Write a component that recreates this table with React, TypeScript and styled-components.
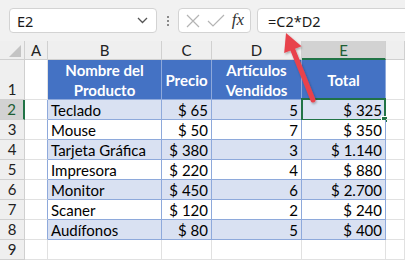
import React from "react";
import styled, { createGlobalStyle, css } from "styled-components";

const Global = createGlobalStyle`
  html, body { margin: 0; padding: 0; background: #ffffff; }
  body { width: 405px; height: 261px; overflow: hidden; }
  * { box-sizing: border-box; }
`;

const Page = styled.div`
  position: relative;
  width: 405px;
  height: 261px;
  overflow: hidden;
  font-family: Lato, "Open Sans", sans-serif;
`;

/* ---------- formula bar ---------- */

const Toolbar = styled.div`
  height: 41px;
  background: #f1f1f1;
  display: flex;
  align-items: flex-start;
  padding: 8px 0 0 9px;
  overflow: hidden;
`;

const Field = styled.div<{ $w?: number }>`
  height: 25px;
  background: #ffffff;
  border: 1px solid #d3d3d3;
  border-radius: 4px;
  display: flex;
  align-items: center;
  flex: 0 0 ${(p) => (p.$w ? `${p.$w}px` : "auto")};
  font-family: "Noto Sans", "Open Sans", sans-serif;
  font-size: 14.5px;
  color: #1a1a1a;
`;

const NameBox = styled(Field)`
  justify-content: space-between;
  padding: 0 8px 0 7px;
`;

const FxBox = styled(Field)`
  justify-content: space-between;
  padding: 0 6px 0 6px;
`;

const FormulaBox = styled(Field)`
  flex: 0 0 170px;
  margin-left: 6px;
  padding-left: 10px;
`;

const Grip = styled.div`
  flex: 0 0 21px;
  height: 25px;
  display: flex;
  flex-direction: column;
  align-items: center;
  justify-content: center;
  gap: 2px;
  span {
    width: 2px;
    height: 2px;
    background: #8a8a8a;
  }
`;

const FxLabel = styled.span`
  font-family: "Liberation Serif", "DejaVu Serif", serif;
  font-style: italic;
  font-size: 17px;
  color: #333;
  margin-top: -2px;
`;

/* ---------- sheet grid ---------- */

const Sheet = styled.div`
  display: grid;
  grid-template-columns: 25px 23px 114px 50px 90px 84px 1fr;
  grid-template-rows: 19px 40px repeat(8, 20px);
  font-size: 15px;
`;

type Kind = "corner" | "col" | "row" | "blank" | "th" | "td";

const GRID = "#e1e1e1";
const HEAD_LINE = "#d0d0d0";
const TABLE_LINE = "#8ea9db";
const BAND = "#d9e1f2";
const HEAD_BG = "#4472c4";
const GREEN = "#217346";

const Cell = styled.div<{
  $kind: Kind;
  $band?: boolean;
  $right?: boolean;
  $active?: boolean;
  $edge?: boolean;
}>`
  position: relative;
  display: flex;
  align-items: center;
  white-space: nowrap;
  color: #000;
  border-right: 1px solid ${GRID};
  border-bottom: 1px solid ${GRID};
  padding: 0 3px;
  justify-content: ${(p) => (p.$right ? "flex-end" : "flex-start")};

  ${(p) =>
    p.$kind === "corner" &&
    css`
      background: #efefef;
      border-right-color: ${HEAD_LINE};
      border-bottom-color: ${HEAD_LINE};
    `}

  ${(p) =>
    p.$kind === "col" &&
    css`
      justify-content: center;
      background: ${p.$active ? "#d2d2d2" : "#efefef"};
      color: ${p.$active ? "#1d5e35" : "#222"};
      border-right-color: ${HEAD_LINE};
      border-bottom: ${p.$active ? `2px solid ${GREEN}` : `1px solid ${HEAD_LINE}`};
      font-size: 15px;
    `}

  ${(p) =>
    p.$kind === "row" &&
    css`
      justify-content: center;
      align-items: flex-end;
      padding-bottom: 1px;
      background: ${p.$active ? "#d2d2d2" : "#efefef"};
      color: ${p.$active ? "#1d5e35" : "#222"};
      border-bottom-color: ${HEAD_LINE};
      border-right: ${p.$active ? `2px solid ${GREEN}` : `1px solid ${HEAD_LINE}`};
    `}

  ${(p) =>
    p.$kind === "blank" &&
    p.$edge &&
    css`
      border-right-color: ${TABLE_LINE};
    `}

  ${(p) =>
    p.$kind === "th" &&
    css`
      background: ${HEAD_BG};
      color: #fff;
      font-weight: 700;
      justify-content: center;
      text-align: center;
      white-space: normal;
      line-height: 20px;
      border-right-color: ${TABLE_LINE};
      border-bottom-color: ${TABLE_LINE};
    `}

  ${(p) =>
    p.$kind === "td" &&
    css`
      background: ${p.$band ? BAND : "#fff"};
      border-right-color: ${TABLE_LINE};
      border-bottom-color: ${TABLE_LINE};
    `}
`;

/* green frame around the active cell, with its fill handle */
const Selection = styled.div`
  position: absolute;
  left: -1px;
  top: -2px;
  right: -1px;
  bottom: -2px;
  border: 2px solid ${GREEN};
  pointer-events: none;
  &::after {
    content: "";
    position: absolute;
    right: -4px;
    bottom: -4px;
    width: 5px;
    height: 5px;
    background: ${GREEN};
    border: 1px solid #fff;
  }
`;

const Callout = styled.svg`
  position: absolute;
  left: 0;
  top: 0;
  pointer-events: none;
`;

const rows = [
  ["Teclado", "$ 65", "5", "$ 325"],
  ["Mouse", "$ 50", "7", "$ 350"],
  ["Tarjeta Gráfica", "$ 380", "3", "$ 1.140"],
  ["Impresora", "$ 220", "4", "$ 880"],
  ["Monitor", "$ 450", "6", "$ 2.700"],
  ["Scaner", "$ 120", "2", "$ 240"],
  ["Audífonos", "$ 80", "5", "$ 400"],
];

const columns = ["A", "B", "C", "D", "E", ""];

export default function App() {
  return (
    <Page>
      <Global />
      <Toolbar>
        <NameBox $w={148}>
          <span>E2</span>
          <svg width="11" height="7" viewBox="0 0 11 7">
            <path d="M1 1 L5.5 5.5 L10 1" fill="none" stroke="#555" strokeWidth="1.3" />
          </svg>
        </NameBox>
        <Grip>
          <span />
          <span />
          <span />
        </Grip>
        <FxBox $w={73}>
          <svg width="16" height="16" viewBox="0 0 16 16">
            <path d="M2 2 L14 14 M14 2 L2 14" stroke="#b4b4b4" strokeWidth="1.2" />
          </svg>
          <svg width="18" height="14" viewBox="0 0 18 14">
            <path d="M1 7 L6 12 L17 1" fill="none" stroke="#b4b4b4" strokeWidth="1.2" />
          </svg>
          <FxLabel>fx</FxLabel>
        </FxBox>
        <FormulaBox>=C2*D2</FormulaBox>
      </Toolbar>

      <Sheet>
        <Cell $kind="corner">
          <svg width="12" height="12" viewBox="0 0 12 12" style={{ marginLeft: "auto", marginTop: "auto", marginBottom: 2 }}>
            <path d="M12 0 L12 12 L0 12 Z" fill="#c4c4c4" />
          </svg>
        </Cell>
        {columns.map((c, i) => (
          <Cell key={i} $kind="col" $active={c === "E"}>
            {c}
          </Cell>
        ))}

        <Cell $kind="row">1</Cell>
        <Cell $kind="blank" />
        <Cell $kind="th">Nombre del Producto</Cell>
        <Cell $kind="th">Precio</Cell>
        <Cell $kind="th">Artículos Vendidos</Cell>
        <Cell $kind="th">Total</Cell>
        <Cell $kind="blank" />

        {rows.map((r, i) => {
          const band = i % 2 === 0;
          return (
            <React.Fragment key={i}>
              <Cell $kind="row" $active={i === 0}>
                {i + 2}
              </Cell>
              <Cell $kind="blank" $edge />
              <Cell $kind="td" $band={band}>
                {r[0]}
              </Cell>
              <Cell $kind="td" $band={band} $right>
                {r[1]}
              </Cell>
              <Cell $kind="td" $band={band} $right>
                {r[2]}
              </Cell>
              <Cell $kind="td" $band={band} $right>
                {r[3]}
                {i === 0 && <Selection />}
              </Cell>
              <Cell $kind="blank" />
            </React.Fragment>
          );
        })}

        <Cell $kind="row">9</Cell>
        {columns.map((_, i) => (
          <Cell key={i} $kind="blank" />
        ))}
      </Sheet>

      <Callout width="405" height="261" viewBox="0 0 405 261">
        <defs>
          <filter id="shade" x="-50%" y="-50%" width="200%" height="200%">
            <feDropShadow dx="1" dy="1.5" stdDeviation="1.2" floodColor="#000" floodOpacity="0.3" />
          </filter>
        </defs>
        <g filter="url(#shade)" fill="#e8424c" stroke="none">
          <path d="M313 100 L292.8 49.7" stroke="#e8424c" strokeWidth="5" strokeLinecap="round" />
          <path d="M286 33 L301.5 46.3 L284.2 53.1 Z" />
        </g>
      </Callout>
    </Page>
  );
}
